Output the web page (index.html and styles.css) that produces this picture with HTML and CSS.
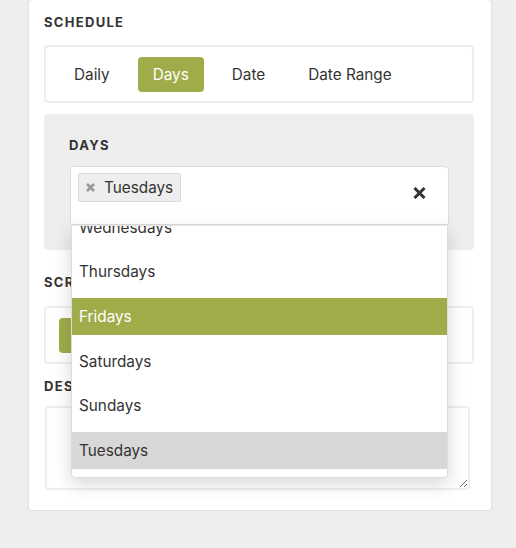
FILE: index.html
```html
<!DOCTYPE html>
<html>
<head>
<meta charset="utf-8">
<link rel="stylesheet" href="styles.css">
</head>
<body>
<div class="card">
  <div class="label first">Schedule</div>
  <div class="tabs">
    <span class="tab">Daily</span>
    <span class="tab active">Days</span>
    <span class="tab">Date</span>
    <span class="tab">Date Range</span>
  </div>
  <div class="panel">
    <div class="label">Days</div>
    <div class="select">
      <span class="tag">
        <svg class="tag-x" width="9" height="9" viewBox="0 0 9 9"><path d="M1 1L8 8M8 1L1 8" stroke="#999" stroke-width="2.6" stroke-linecap="butt"/></svg>
        <span>Tuesdays</span>
      </span>
      <svg class="clear" width="13" height="12" viewBox="0 0 13 12"><path d="M1.5 1L11.5 11M11.5 1L1.5 11" stroke="#333" stroke-width="3"/></svg>
      <div class="dropdown">
        <ul class="options">
          <li>Wednesdays</li>
          <li>Thursdays</li>
          <li class="hl">Fridays</li>
          <li>Saturdays</li>
          <li>Sundays</li>
          <li class="sel">Tuesdays</li>
        </ul>
      </div>
    </div>
  </div>
  <div class="label second">Screen</div>
  <div class="tabs">
    <span class="tab active">Fullscreen</span>
    <span class="tab">Window</span>
  </div>
  <div class="label third">Description</div>
  <textarea class="area"></textarea>
</div>
</body>
</html>
```

FILE: styles.css
```css
html, body {
  margin: 0;
  padding: 0;
  background: #eeeeee;
  font-family: Inter, "Liberation Sans", sans-serif;
  color: #333;
}
.card {
  margin: -1px 0 0 28px;
  width: 430px;
  padding: 14px 17px 20px 15px;
  background: #fff;
  border: 1px solid #e3e3e3;
  border-radius: 4px;
  box-shadow: 0 1px 2px rgba(0,0,0,0.05);
}
.label {
  font-size: 13px;
  line-height: 16px;
  font-weight: 700;
  letter-spacing: 1.3px;
  text-transform: uppercase;
  color: #333;
}
.label.first { margin-bottom: 15px; }
.label.second { margin: 23.5px 0 16.5px; }
.label.third { margin: 13.5px 0 12.5px; }
.tabs {
  display: flex;
  gap: 13px;
  height: 58px;
  box-sizing: border-box;
  border: 2px solid #eeeeee;
  border-radius: 4px;
  padding: 10px 13px 9px;
}
.tab {
  display: flex;
  align-items: center;
  height: 35px;
  padding: 0 15px;
  font-size: 15.3px;
  border-radius: 4px;
  color: #333;
}
.tab.active {
  background: #a0ac4a;
  color: #fff;
}
.panel {
  margin-top: 11px;
  background: #eeeeee;
  border-radius: 4px;
  padding: 23px 25px 25px;
}
.panel .label { margin-bottom: 13px; }
.select {
  position: relative;
  display: flex;
  align-items: flex-start;
  margin-left: 1px;
  height: 59px;
  box-sizing: border-box;
  background: #fff;
  border: 1px solid #dcdcdc;
  border-radius: 4px 4px 0 0;
  padding: 6px 22px 0 7px;
}
.tag {
  display: flex;
  align-items: center;
  gap: 9px;
  height: 29px;
  box-sizing: border-box;
  padding: 0 7px 0 7px;
  background: #eeeeee;
  border: 1px solid #dadada;
  border-radius: 2px;
  font-size: 15.3px;
  line-height: 22px;
  color: #333;
}
.tag-x { display: block; }
.clear {
  display: block;
  margin: 14px 0 0 auto;
}
.dropdown {
  position: absolute;
  left: 0;
  right: 0;
  top: 59px;
  height: 251px;
  overflow: hidden;
  background: #fff;
  border: 1px solid #dcdcdc;
  border-top: 0;
  border-radius: 0 0 4px 4px;
  box-shadow: 0 6px 18px rgba(0,0,0,0.16);
  z-index: 5;
}
.options {
  list-style: none;
  margin: -17.33px 0 0;
  padding: 0;
  display: flex;
  flex-direction: column;
  gap: 7.67px;
}
.options li {
  height: 37px;
  line-height: 37px;
  padding-left: 7px;
  font-size: 15.3px;
  color: #333;
}
.options li.hl {
  background: #a0ac4a;
  color: #fff;
}
.options li.sel {
  background: #d8d8d8;
}
.area {
  display: block;
  margin-left: 1px;
  width: 425px;
  height: 84px;
  box-sizing: border-box;
  border: 2px solid #eeeeee;
  border-radius: 4px;
  font-family: inherit;
}
```
